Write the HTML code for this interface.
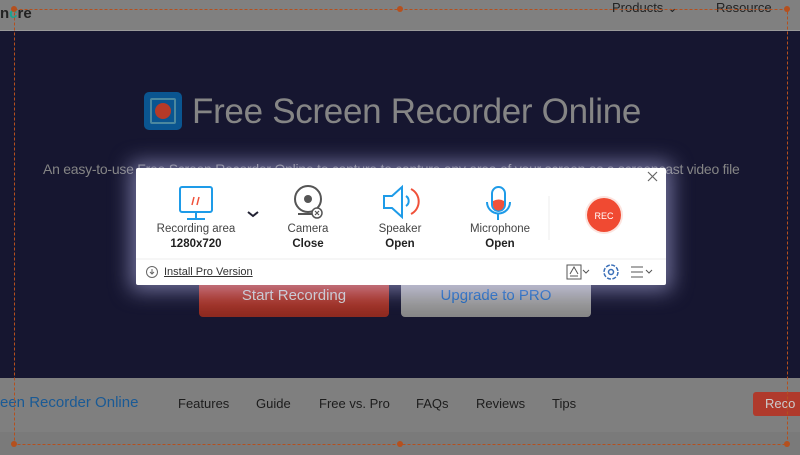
<!DOCTYPE html>
<html><head><style>
*{margin:0;padding:0;box-sizing:border-box}
body{width:800px;height:455px;overflow:hidden;position:relative;background:#161630;font-family:"Liberation Sans",Arial,sans-serif}
.a{position:absolute}
.top{left:0;top:0;width:800px;height:31px;background:#808080;border-bottom:1px solid #9a9a9a}
.bot{left:0;top:378px;width:800px;height:77px;background:#7f7f7f}
.bot2{left:0;top:432px;width:800px;height:23px;background:#7a7a7a}
.nav{top:396px;font-size:13px;color:#1c1c1c}
.panel{left:136px;top:168px;width:530px;height:117px;background:#fff;border-radius:2px;box-shadow:0 0 20px 6px rgba(200,200,255,.5)}
.lbl{font-size:11.5px;color:#444;text-align:center;width:100px}
.val{font-size:11.5px;font-weight:bold;color:#222;text-align:center;width:100px}
</style></head><body>
<div class="a top"></div>
<div class="a" style="left:0;top:5px;font-size:15px;font-weight:bold;color:#222">n<span style="color:#1aa38f">c</span>re</div>
<div class="a" style="left:612px;top:0;font-size:13px;color:#222">Products ⌄</div>
<div class="a" style="left:716px;top:0;font-size:13px;color:#222">Resource</div>

<div class="a" style="left:144px;top:92px;width:38px;height:38px;border-radius:5px;background:#0a5590"></div>
<div class="a" style="left:150px;top:98px;width:26px;height:26px;border:2px solid #7aa;border-radius:2px;opacity:.6"></div>
<div class="a" style="left:155px;top:103px;width:16px;height:16px;border-radius:50%;background:#b53a28"></div>
<div class="a" style="left:192px;top:92px;font-size:35px;color:#858585;letter-spacing:-0.3px">Free Screen Recorder Online</div>
<div class="a" style="left:43px;top:161px;font-size:14px;color:#858585;letter-spacing:-0.25px;white-space:nowrap">An easy-to-use Free Screen Recorder Online to capture to capture any area of your screen as a screencast video file</div>

<div class="a" style="left:199px;top:270px;width:190px;height:47px;border-radius:4px;background:linear-gradient(#d2402e,#8c2a20)"></div>
<div class="a" style="left:199px;top:287px;width:190px;text-align:center;font-size:15px;color:#ccc">Start Recording</div>
<div class="a" style="left:401px;top:270px;width:190px;height:47px;border-radius:4px;background:linear-gradient(#bdbdbd,#868686)"></div>
<div class="a" style="left:401px;top:287px;width:190px;text-align:center;font-size:15px;color:#1a64b8">Upgrade to PRO</div>

<div class="a bot"></div><div class="a bot2"></div>
<div class="a" style="left:0;top:394px;font-size:15px;color:#1a5a95">een Recorder Online</div>
<div class="a nav" style="left:178px">Features</div>
<div class="a nav" style="left:256px">Guide</div>
<div class="a nav" style="left:319px">Free vs. Pro</div>
<div class="a nav" style="left:416px">FAQs</div>
<div class="a nav" style="left:476px">Reviews</div>
<div class="a nav" style="left:552px">Tips</div>
<div class="a" style="left:753px;top:392px;width:60px;height:24px;border-radius:3px;background:#b03a2c;color:#ccc;font-size:13px;padding:4px 0 0 12px">Reco</div>

<svg class="a" style="left:0;top:0" width="800" height="455">
<rect x="14.5" y="9.5" width="773" height="435" fill="none" stroke="#b5501e" stroke-dasharray="3 2"/>
<g fill="#b5501e"><circle cx="14" cy="9" r="3"/><circle cx="400" cy="9" r="3"/><circle cx="787" cy="9" r="3"/><circle cx="14" cy="444" r="3"/><circle cx="400" cy="444" r="3"/><circle cx="787" cy="444" r="3"/></g>
</svg>

<div class="a panel">
<svg class="a" style="left:0;top:0" width="530" height="117">
<path d="M512 4l9 9M521 4l-9 9" stroke="#666" stroke-width="1.2"/>
<rect x="44" y="19" width="32" height="25" rx="2" fill="none" stroke="#1e9be8" stroke-width="2"/>
<path d="M56 37l2-8M61 37l2-8" stroke="#f0513a" stroke-width="1.5"/>
<path d="M60 44v6M51 51h18" stroke="#1e9be8" stroke-width="2"/>
<path d="M112 44l5 4 5-4" fill="none" stroke="#223" stroke-width="2"/>
<circle cx="172" cy="31" r="13" fill="none" stroke="#555" stroke-width="2"/>
<circle cx="172" cy="31" r="4" fill="#555"/>
<path d="M162 46h20" stroke="#555" stroke-width="2"/>
<circle cx="181" cy="45" r="5" fill="#fff" stroke="#555" stroke-width="1.5"/>
<path d="M179 43l4 4M183 43l-4 4" stroke="#555" stroke-width="1.2"/>
<path d="M248 28h8l10-9v30l-10-9h-8z" fill="none" stroke="#1e9be8" stroke-width="2"/>
<path d="M270 28a6 6 0 0 1 0 10" fill="none" stroke="#1e9be8" stroke-width="2"/>
<path d="M275 21a14 14 0 0 1 0 25" fill="none" stroke="#f0513a" stroke-width="2"/>
<rect x="356" y="19" width="13" height="24" rx="6.5" fill="none" stroke="#1e9be8" stroke-width="2"/>
<path d="M357 33q6-3 11 0v4a5 5 0 0 1-11 0z" fill="#f0513a"/>
<path d="M351 34a11 11 0 0 0 23 0M362 45v7" fill="none" stroke="#1e9be8" stroke-width="2"/>
<path d="M413 28v44" stroke="#eee"/>
<circle cx="468" cy="47" r="19" fill="#fad0c8" opacity=".6"/>
<circle cx="468" cy="47" r="17" fill="#f04a32"/>
<text x="468" y="51" fill="#fff" font-size="9" text-anchor="middle" font-family="Liberation Sans">REC</text>
<path d="M0 91h530" stroke="#eee"/>
<circle cx="16" cy="104" r="5.5" fill="none" stroke="#666"/>
<path d="M16 101v5M14 104l2 2 2-2" fill="none" stroke="#666"/>
<rect x="431" y="97" width="14" height="14" fill="none" stroke="#555"/>
<path d="M434 106l4-7 4 7M434 108h8" fill="none" stroke="#555"/>
<path d="M447 102l3 3 3-3" fill="none" stroke="#555"/>
<circle cx="475" cy="104" r="7" fill="none" stroke="#3a6fb8" stroke-width="1.5" stroke-dasharray="4 1.5"/>
<circle cx="475" cy="104" r="2.5" fill="none" stroke="#3a6fb8" stroke-width="1.5"/>
<path d="M495 99h12M495 104h12M495 109h12" stroke="#555"/>
<path d="M510 102l3 3 3-3" fill="none" stroke="#555"/>
</svg>
<div class="a lbl" style="left:10px;top:55px">Recording area</div>
<div class="a val" style="left:10px;top:70px">1280x720</div>
<div class="a lbl" style="left:122px;top:55px">Camera</div>
<div class="a val" style="left:122px;top:70px">Close</div>
<div class="a lbl" style="left:214px;top:55px">Speaker</div>
<div class="a val" style="left:214px;top:70px">Open</div>
<div class="a lbl" style="left:314px;top:55px">Microphone</div>
<div class="a val" style="left:314px;top:70px">Open</div>
<div class="a" style="left:28px;top:98px;font-size:11px;color:#333;text-decoration:underline">Install Pro Version</div>
</div>
</body></html>
